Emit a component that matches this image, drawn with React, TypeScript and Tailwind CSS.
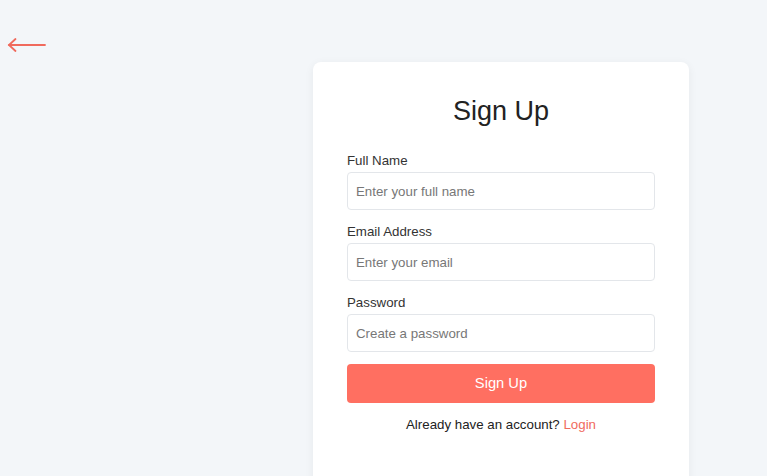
import React from 'react';

const fields = [
  { id: 'name', label: 'Full Name', type: 'text', placeholder: 'Enter your full name' },
  { id: 'email', label: 'Email Address', type: 'email', placeholder: 'Enter your email' },
  { id: 'password', label: 'Password', type: 'password', placeholder: 'Create a password' },
];

const App: React.FC = () => {
  return (
    <div className="min-h-[476px] bg-[#f3f6f9] font-['Liberation_Sans',Arial,sans-serif] relative overflow-hidden h-[476px]">
      <button className="absolute left-[7px] top-[33px] text-[#f06a5d]" aria-label="Back">
        <svg width="40" height="24" viewBox="0 0 40 24" fill="none" stroke="currentColor" strokeWidth="1.8" strokeLinecap="round">
          <path d="M2 12H38" />
          <path d="M8.5 6L2 12L8.5 18" />
        </svg>
      </button>

      <div className="pl-[313px] pt-[62px]">
        <div className="w-[376px] bg-white rounded-[8px] shadow-[0_2px_10px_rgba(0,0,0,0.06)] px-[34px] pt-[33px] pb-[80px]">
          <h2 className="text-center text-[27px] leading-[32px] text-[#222] mb-[26px]">Sign Up</h2>

          <form onSubmit={(e) => e.preventDefault()}>
            {fields.map((f) => (
              <div key={f.id} className="mb-[14px]">
                <label htmlFor={f.id} className="block text-[13.3px] leading-[16px] text-[#333] mb-[3px]">
                  {f.label}
                </label>
                <input
                  id={f.id}
                  type={f.type}
                  placeholder={f.placeholder}
                  className="w-full h-[38px] px-[8px] text-[13.3px] border border-[#e3e6ea] rounded-[4px] placeholder:text-[#777] outline-none"
                />
              </div>
            ))}

            <button
              type="submit"
              className="w-full h-[39px] mt-[-2px] bg-[#ff6f61] text-white text-[14.7px] rounded-[4px]"
            >
              Sign Up
            </button>
          </form>

          <p className="text-center text-[13.3px] leading-[16px] text-[#222] mt-[14px]">
            Already have an account? <a href="#" className="text-[#f06a5d]">Login</a>
          </p>
        </div>
      </div>
    </div>
  );
};

export default App;
